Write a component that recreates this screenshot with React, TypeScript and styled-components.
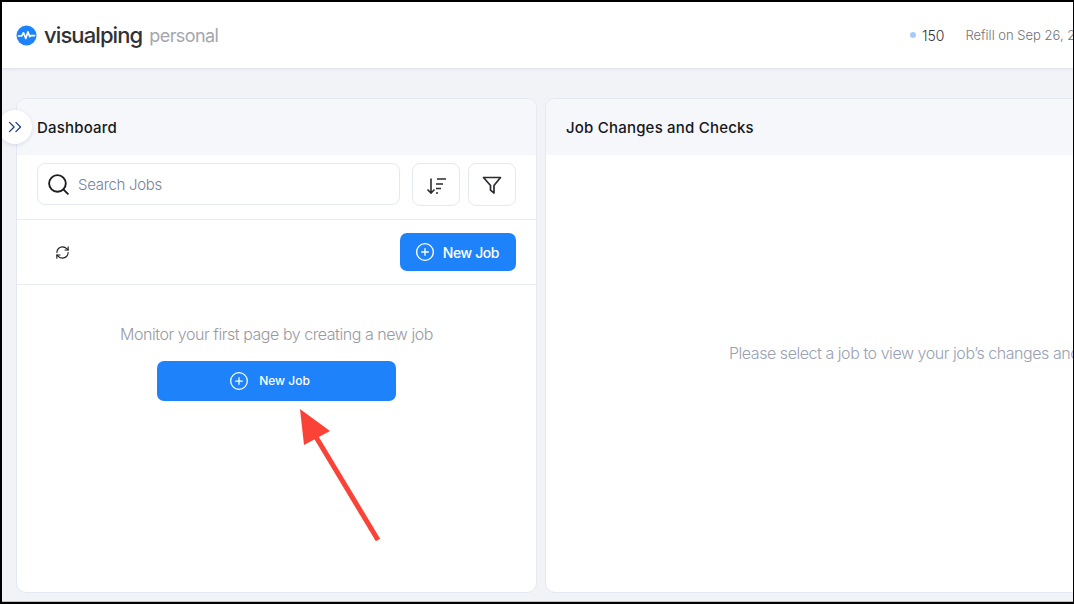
import React from 'react'
import styled, { createGlobalStyle } from 'styled-components'
import { ChevronsRight, RefreshCw, Search, CirclePlus } from 'lucide-react'

const GlobalStyle = createGlobalStyle`
  html, body {
    margin: 0;
    padding: 0;
    width: 1074px;
    height: 604px;
    overflow: hidden;
    background: #000;
    font-family: "Inter", "Liberation Sans", sans-serif;
  }
  * { box-sizing: border-box; }
`

const Viewport = styled.div`
  position: relative;
  width: 1074px;
  height: 604px;
  overflow: hidden;
  border-top: 2px solid #000;
  border-left: 2px solid #000;
  border-right: 1px solid #000;
  border-bottom: 2px solid #000;
  background: #f1f3f7;
`

const Page = styled.div`
  width: 1330px;
  height: 100%;
  display: flex;
  flex-direction: column;
  border-bottom: 1px solid #b9c0cc;
`

const Header = styled.header`
  height: 67px;
  flex: none;
  display: flex;
  align-items: center;
  padding-left: 14px;
  background: #fff;
  border-bottom: 1px solid #e3e6ee;
  box-shadow: 0 1px 2px rgba(60, 70, 100, 0.06);
`

const LogoName = styled.span`
  margin-left: 7px;
  font-size: 22px;
  font-weight: 500;
  letter-spacing: -0.9px;
  color: #303236;
`

const Plan = styled.span`
  margin-left: 7px;
  font-size: 18px;
  font-weight: 400;
  letter-spacing: -0.6px;
  color: #a5a6ae;
`

const Credits = styled.div`
  margin-left: auto;
  width: 422px;
  display: flex;
  align-items: center;
  font-size: 14px;
`

const Dot = styled.span`
  width: 6px;
  height: 6px;
  border-radius: 50%;
  background: #a5cbfb;
`

const CreditCount = styled.span`
  margin-left: 6px;
  font-weight: 300;
  color: #303236;
`

const Refill = styled.span`
  margin-left: 21px;
  font-size: 13px;
  font-weight: 300;
  color: #6f7178;
`

const Panels = styled.main`
  flex: 1;
  min-height: 0;
  display: flex;
  gap: 8px;
  padding: 29px 14px 8px 14px;
`

const Panel = styled.section<{ $width?: number }>`
  flex: ${p => (p.$width ? `0 0 ${p.$width}px` : '1')};
  display: flex;
  flex-direction: column;
  background: #fff;
  border: 1px solid #e4e8f1;
  border-radius: 10px;
  overflow: hidden;
`

const PanelTitle = styled.h2`
  height: 56px;
  flex: none;
  margin: 0;
  display: flex;
  align-items: center;
  padding-left: 20px;
  font-size: 15px;
  font-weight: 500;
  letter-spacing: 0.2px;
  color: #17181b;
  background: #f5f7fb;
`

const Toolbar = styled.div`
  display: flex;
  gap: 8px;
  padding: 8px 20px 13px;
  border-bottom: 1px solid #e8ebf2;
`

const SearchBox = styled.div`
  flex: 1;
  height: 42px;
  display: flex;
  align-items: center;
  gap: 7px;
  margin-right: 4px;
  padding-left: 8px;
  border: 1px solid #e4e8f1;
  border-radius: 8px;
  color: #1c1d20;
`

const SearchText = styled.span`
  font-size: 15px;
  font-weight: 300;
  letter-spacing: -0.3px;
  color: #76829a;
`

const IconButton = styled.button`
  width: 48px;
  height: 43px;
  padding: 0;
  display: flex;
  align-items: center;
  justify-content: center;
  background: #fff;
  border: 1px solid #e4e8f1;
  border-radius: 8px;
  color: #2b2c30;
`

const ActionRow = styled.div`
  height: 65px;
  flex: none;
  display: flex;
  align-items: center;
  justify-content: space-between;
  padding: 0 20px 0 38px;
  border-bottom: 1px solid #e8ebf2;
  color: #1c1d20;
`

const PrimaryButton = styled.button<{ $wide?: boolean }>`
  width: ${p => (p.$wide ? '239px' : '116px')};
  height: ${p => (p.$wide ? '40px' : '38px')};
  padding: ${p => (p.$wide ? '0 14px 1px 0' : '0 2px 0 0')};
  display: flex;
  align-items: center;
  justify-content: center;
  gap: ${p => (p.$wide ? '10px' : '8px')};
  background: #1e83fb;
  border: 0;
  border-radius: 7px;
  color: #fff;
  font-family: inherit;
  font-size: ${p => (p.$wide ? '12px' : '14px')};
  font-weight: 500;
  letter-spacing: ${p => (p.$wide ? '0' : '-0.4px')};
`

const EmptyState = styled.div`
  display: flex;
  flex-direction: column;
  align-items: center;
  padding-top: 39px;
`

const EmptyText = styled.p`
  margin: 0 0 17px;
  font-size: 16px;
  font-weight: 300;
  line-height: 20px;
  letter-spacing: -0.45px;
  color: #989aa3;
`

const SelectHint = styled.div`
  flex: 1;
  display: flex;
  align-items: center;
  justify-content: center;
  padding-bottom: 41px;
  font-size: 16px;
  font-weight: 300;
  letter-spacing: -0.45px;
  color: #99a1b2;
`

const SidebarToggle = styled.button`
  position: absolute;
  top: 108px;
  left: -4px;
  width: 34px;
  height: 34px;
  padding: 0;
  display: flex;
  align-items: center;
  justify-content: center;
  background: #fff;
  border: 0;
  border-radius: 50%;
  box-shadow: 0 1px 4px rgba(40, 50, 80, 0.14);
  color: #1d3f7c;
`

const Annotation = styled.svg`
  position: absolute;
  left: -2px;
  top: -2px;
  pointer-events: none;
`

const LogoMark = () => (
  <svg width="21" height="21" viewBox="0 0 22 22">
    <circle cx="11" cy="11" r="10.5" fill="#1e83fb" />
    <path
      d="M2.5 11.5h3.6l1.8-3.4 2.4 6 2.2-7 1.9 5.2 1.1-1.2h4"
      fill="none"
      stroke="#fff"
      strokeWidth="1.7"
      strokeLinecap="round"
      strokeLinejoin="round"
    />
  </svg>
)

const SortIcon = () => (
  <svg width="24" height="24" viewBox="0 0 24 24" fill="none" stroke="currentColor" strokeWidth="1.6">
    <path d="M7 5.5V20M3.5 16.5 7 20l3.5-3.5" />
    <path d="M13 6h9M12 11h7M12 15.5h5M12 20h2" />
  </svg>
)

const FilterIcon = () => (
  <svg width="24" height="24" viewBox="0 0 24 24" fill="none" stroke="currentColor" strokeWidth="1.7" strokeLinejoin="round">
    <path d="M3.5 4.5h17l-6.5 8v7.5l-3.5-2.8v-4.7z" />
  </svg>
)

export default function App() {
  return (
    <Viewport>
      <GlobalStyle />
      <Page>
        <Header>
          <LogoMark />
          <LogoName>visualping</LogoName>
          <Plan>personal</Plan>
          <Credits>
            <Dot />
            <CreditCount>150</CreditCount>
            <Refill>Refill on Sep 26, 2024</Refill>
          </Credits>
        </Header>
        <Panels>
          <Panel $width={521}>
            <PanelTitle>Dashboard</PanelTitle>
            <Toolbar>
              <SearchBox>
                <Search size={25} strokeWidth={1.8} />
                <SearchText>Search Jobs</SearchText>
              </SearchBox>
              <IconButton><SortIcon /></IconButton>
              <IconButton><FilterIcon /></IconButton>
            </Toolbar>
            <ActionRow>
              <RefreshCw size={15} strokeWidth={1.8} />
              <PrimaryButton>
                <CirclePlus size={20} strokeWidth={1.6} />
                New Job
              </PrimaryButton>
            </ActionRow>
            <EmptyState>
              <EmptyText>Monitor your first page by creating a new job</EmptyText>
              <PrimaryButton $wide>
                <CirclePlus size={20} strokeWidth={1.5} />
                New Job
              </PrimaryButton>
            </EmptyState>
          </Panel>
          <Panel>
            <PanelTitle>Job Changes and Checks</PanelTitle>
            <SelectHint>Please select a job to view your job’s changes and checks</SelectHint>
          </Panel>
        </Panels>
      </Page>
      <SidebarToggle><ChevronsRight size={22} strokeWidth={1.4} /></SidebarToggle>
      <Annotation width="1074" height="604" viewBox="0 0 1074 604">
        <path d="M300 409 L330 431 L304 445 Z" fill="#fb4237" />
        <path d="M316 437 L378 540" stroke="#fb4237" strokeWidth="5" fill="none" />
      </Annotation>
    </Viewport>
  )
}
